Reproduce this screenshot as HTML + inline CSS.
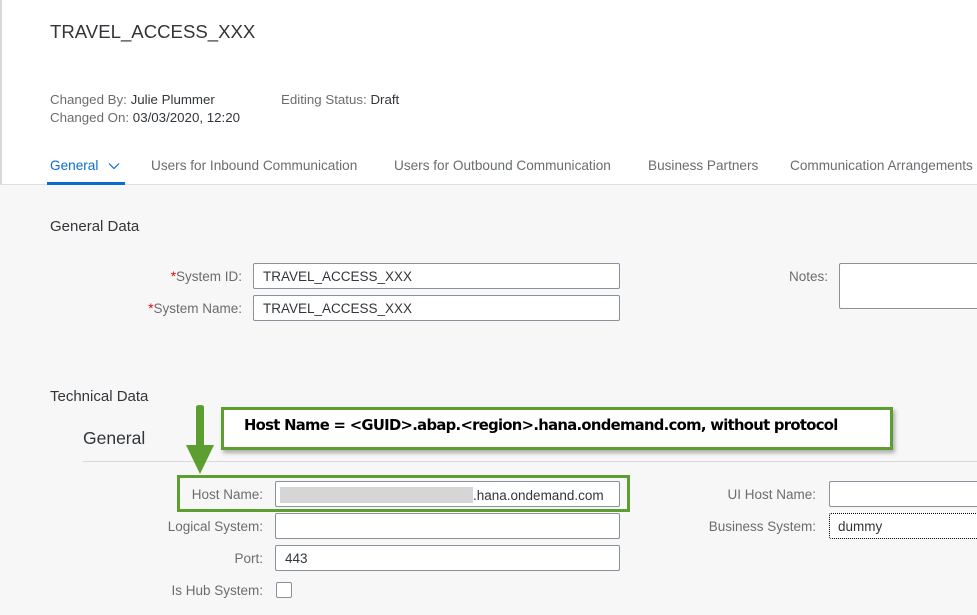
<!DOCTYPE html>
<html><head><style>
*{margin:0;padding:0;box-sizing:border-box}
body{width:977px;height:615px;overflow:hidden;background:#f7f7f7;font-family:"Liberation Sans",Arial,sans-serif;color:#32363a;position:relative}
.a{position:absolute;white-space:nowrap}
.hdr{left:0;top:0;width:977px;height:185px;background:#fff;border-left:2px solid #d9d9d9;border-bottom:1px solid #e0e0e0}
.lbl{font-size:13.5px;color:#6a6d70;text-align:right}
.inp{background:#fff;border:1px solid #89919a;border-radius:2px;font-size:13.5px;padding:5px 9px;height:26px;color:#32363a}
.tab{font-size:13.6px;color:#6a6d70;top:158px}
</style></head><body>
<div class="a hdr"></div>
<div class="a" style="left:50px;top:21px;font-size:18.6px;color:#32363a">TRAVEL_ACCESS_XXX</div>
<div class="a" style="left:50px;top:92px;font-size:13.3px;color:#6a6d70">Changed By: <span style="color:#32363a">Julie Plummer</span></div>
<div class="a" style="left:50px;top:110px;font-size:13.3px;color:#6a6d70">Changed On: <span style="color:#32363a">03/03/2020, 12:20</span></div>
<div class="a" style="left:281px;top:92px;font-size:13.3px;color:#6a6d70">Editing Status: <span style="color:#32363a">Draft</span></div>
<div class="a tab" style="left:50px;color:#0a6ed1">General <svg width="12" height="8" style="margin-left:6px" viewBox="0 0 12 8"><path d="M1 1.5 6 6.5 11 1.5" stroke="#0a6ed1" fill="none" stroke-width="1.2"/></svg></div>
<div class="a" style="left:47px;top:182px;width:78px;height:3px;background:#0a6ed1"></div>
<div class="a tab" style="left:151px">Users for Inbound Communication</div>
<div class="a tab" style="left:394px">Users for Outbound Communication</div>
<div class="a tab" style="left:648px">Business Partners</div>
<div class="a tab" style="left:790px">Communication Arrangements</div>
<div class="a" style="left:50px;top:218px;font-size:15px">General Data</div>
<div class="a lbl" style="left:100px;width:142px;top:269px"><span style="color:#e00">*</span>System ID:</div>
<div class="a lbl" style="left:100px;width:142px;top:301px"><span style="color:#e00">*</span>System Name:</div>
<div class="a inp" style="left:253px;top:263px;width:367px">TRAVEL_ACCESS_XXX</div>
<div class="a inp" style="left:253px;top:295px;width:367px">TRAVEL_ACCESS_XXX</div>
<div class="a lbl" style="left:700px;width:128px;top:269px">Notes:</div>
<div class="a inp" style="left:839px;top:263px;width:150px;height:46px"></div>
<div class="a" style="left:50px;top:388px;font-size:15px">Technical Data</div>
<div class="a" style="left:83px;top:428px;font-size:17.5px">General</div>
<div class="a" style="left:83px;top:461px;width:900px;height:1px;background:#d9d9d9"></div>
<div class="a" style="left:221px;top:407px;width:672px;height:43px;background:#fff;border:3px solid #5c9e2f;box-shadow:2px 3px 4px rgba(0,0,0,.3);font-family:'DejaVu Sans',sans-serif;font-weight:bold;font-size:14.8px;color:#000;padding:7px 0 0 20px;letter-spacing:-0.7px">Host Name = &lt;GUID&gt;.abap.&lt;region&gt;.hana.ondemand.com, without protocol</div>
<svg class="a" style="left:184px;top:405px" width="32" height="72" viewBox="0 0 32 72"><path d="M12 2 Q12 0 16 0 Q20 0 20 2 V40 H30 L16 69 L2 40 H12 Z" fill="#5c9e2f"/></svg>
<div class="a" style="left:177px;top:475px;width:453px;height:37px;border:3px solid #5c9e2f"></div>
<div class="a lbl" style="left:100px;width:163px;top:487px">Host Name:</div>
<div class="a lbl" style="left:100px;width:163px;top:519px">Logical System:</div>
<div class="a lbl" style="left:100px;width:163px;top:551px">Port:</div>
<div class="a lbl" style="left:100px;width:163px;top:583px">Is Hub System:</div>
<div class="a inp" style="left:275px;top:481px;width:345px;padding-left:4px"><span style="display:inline-block;width:193px;height:16px;background:#d6d6d6;vertical-align:-3px"></span>.hana.ondemand.com</div>
<div class="a inp" style="left:275px;top:513px;width:345px"></div>
<div class="a inp" style="left:275px;top:545px;width:345px">443</div>
<div class="a" style="left:276px;top:582px;width:16px;height:16px;background:#fff;border:1px solid #89919a;border-radius:2px"></div>
<div class="a lbl" style="left:680px;width:136px;top:487px">UI Host Name:</div>
<div class="a lbl" style="left:680px;width:136px;top:519px">Business System:</div>
<div class="a inp" style="left:829px;top:481px;width:160px"></div>
<div class="a inp" style="left:829px;top:513px;width:160px;border:1px dotted #000;padding-left:8px">dummy</div>
</body></html>
